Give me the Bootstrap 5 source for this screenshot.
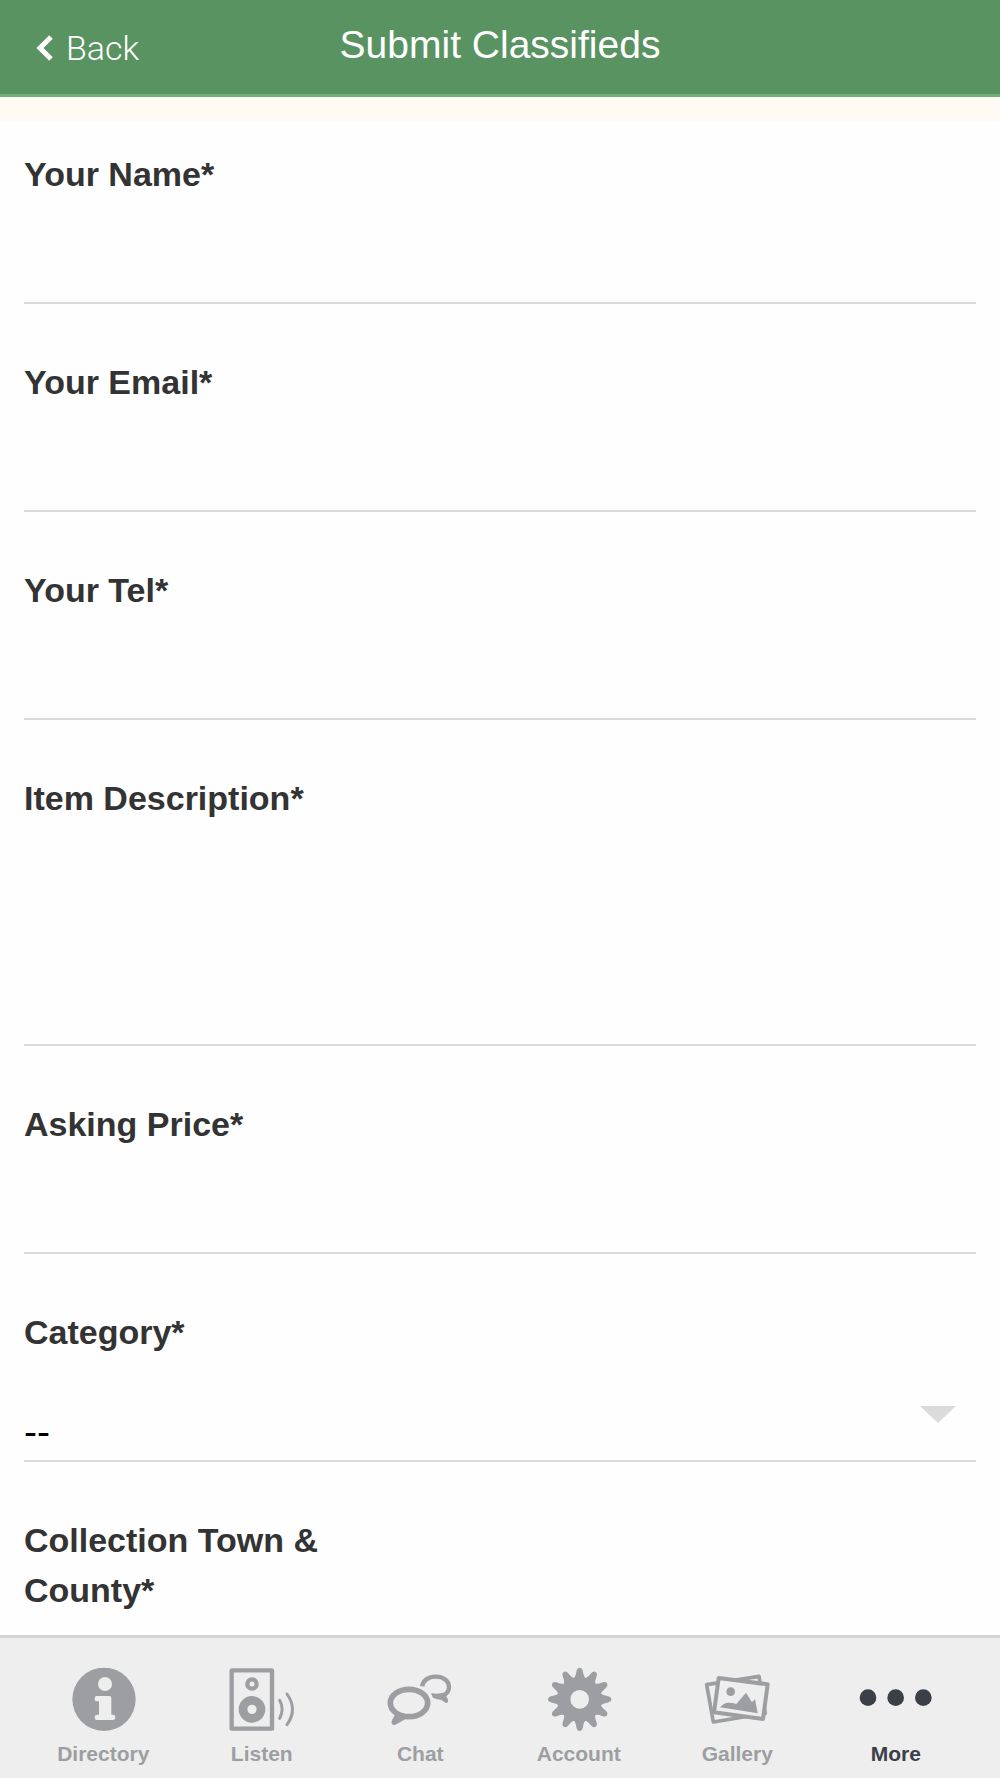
<!DOCTYPE html>
<html lang="en">
<head>
<meta charset="utf-8">
<meta name="viewport" content="width=device-width, initial-scale=1">
<title>Submit Classifieds</title>
<link href="https://cdn.jsdelivr.net/npm/bootstrap@5.3.0/dist/css/bootstrap.min.css" rel="stylesheet">
<style>
  body { font-family: "Liberation Sans", Arial, sans-serif; background: #fefefe; color: #333; }
  .app-head { background: #5a9362; border-bottom: 3px solid #71b079; height: 97px; }
  .back-link { font-family: Roboto, sans-serif; font-weight: 300; font-size: 34px; line-height: 44px; padding: 26px 0 0 36px; gap: 12px; }
  .app-title { font-size: 39px; line-height: 48px; padding-top: 21px; font-weight: 400; }
  .app-body { scrollbar-width: none; min-height: 0; }
  .app-body::-webkit-scrollbar { display: none; }
  .notice-strip { background: #fffaf3; height: 24px; }
  .ad-form { padding: 28px 24px 24px; }
  .field + .field { margin-top: 53px; }
  .field label { display: block; width: 35%; color: #333; font-size: 34px; line-height: 50px; padding-bottom: 1px; font-weight: 700; }
  .line-input { border: 0; border-bottom: 2px solid #dbdbdb; border-radius: 0; background-color: transparent; height: 104px; padding: 40px 0 0; font-size: 34px; color: #000; resize: none; }
  .line-area.line-input { height: 222px; }
  select.line-input { font-size: 39px; line-height: 44px; padding: 52px 60px 6px 0; color: #000;
    background: url("data:image/svg+xml,%3Csvg xmlns='http://www.w3.org/2000/svg' viewBox='0 0 36 17'%3E%3Cpath fill='%23dbdbdb' d='M0 0h36L18 17z'/%3E%3C/svg%3E") right 20px top 48px / 36px 17px no-repeat; }
  .tab-bar { background: #eee; border-top: 3px solid #d5d5d5; padding: 28px 25px 8px 24px; }
  .tab-item { flex: 1 1 0; gap: 6px; color: #9d9ea2; font-size: 21px; line-height: 32px; font-weight: 700; }
  .tab-item.current { color: #3b4048; }
  .tab-item svg { width: 80px; height: 66px; }
</style>
<script src="https://cdn.jsdelivr.net/npm/bootstrap@5.3.0/dist/js/bootstrap.bundle.min.js"></script>
</head>
<body class="vh-100 d-flex flex-column overflow-hidden">
<header class="app-head row g-0 flex-shrink-0 text-white align-items-start">
  <div class="col-3">
    <a href="#" class="back-link d-flex align-items-center text-white text-decoration-none">
      <svg width="18" height="26" viewBox="0 0 18 26" fill="none" stroke="#fff" stroke-width="5" aria-hidden="true"><path d="M15 2 4 13l11 11"/></svg>
      <span>Back</span>
    </a>
  </div>
  <h1 class="app-title col-6 text-center text-nowrap mb-0">Submit Classifieds</h1>
</header>

<main class="app-body flex-grow-1 overflow-auto">
  <div class="notice-strip"></div>
  <form class="ad-form">
    <div class="field"><label for="name">Your Name*</label><input id="name" type="text" class="form-control line-input" required></div>
    <div class="field"><label for="email">Your Email*</label><input id="email" type="email" class="form-control line-input" required></div>
    <div class="field"><label for="tel">Your Tel*</label><input id="tel" type="tel" class="form-control line-input" required></div>
    <div class="field"><label for="desc">Item Description*</label><textarea id="desc" class="form-control line-input line-area" required></textarea></div>
    <div class="field"><label for="price">Asking Price*</label><input id="price" type="text" class="form-control line-input" required></div>
    <div class="field"><label for="cat">Category*</label><select id="cat" class="form-select line-input" required><option value="">--</option></select></div>
    <div class="field"><label for="town">Collection Town &amp; County*</label><input id="town" type="text" class="form-control line-input" required></div>
  </form>
</main>

<nav class="tab-bar d-flex flex-shrink-0" aria-label="Main">
  <a href="#" class="tab-item d-flex flex-column align-items-center text-decoration-none">
    <svg viewBox="71 138 240 198" aria-hidden="true"><circle cx="194" cy="238" r="95" fill="currentColor"/><circle cx="197" cy="192" r="21" fill="#eee"/><path fill="#eee" d="M172 228h38q6 0 6 6v50h5q7 0 7 8t-7 8h-48q-7 0-7-8t7-8h6v-40h-6q-7 0-7-8t6-8z"/></svg>
    <span>Directory</span>
  </a>
  <a href="#" class="tab-item d-flex flex-column align-items-center text-decoration-none">
    <svg viewBox="546 138 240 198" fill="none" stroke="currentColor" aria-hidden="true"><rect x="575" y="151" width="121" height="175" rx="1" stroke-width="13" stroke-linejoin="round"/><circle cx="636" cy="192" r="14" stroke-width="13"/><circle cx="636" cy="268" r="27" stroke-width="26"/><path stroke-width="9" stroke-linecap="round" d="M719 241q15 27 0 54M741 222q33 46 0 92"/></svg>
    <span>Listen</span>
  </a>
  <a href="#" class="tab-item d-flex flex-column align-items-center text-decoration-none">
    <svg viewBox="63 138 240 198" fill="none" stroke="currentColor" aria-hidden="true"><ellipse cx="150" cy="249" rx="56" ry="41" stroke-width="17"/><path fill="currentColor" stroke="none" d="M105 274q6 9-2 19c-5 7-7 14-4 19q4 6 13 1l32-18-8-12z"/><path stroke-width="13" d="M190 199c1-17 18-29 40-29 23 0 40 13 40 31 0 12-7 21-18 26"/><path fill="currentColor" stroke="none" d="M216 219q15 4 28 1l22-4c-6 7-6 12-1 19 4 6 3 13-2 14-4 1-9-5-15-8-11-4-23-4-27-9z"/></svg>
    <span>Chat</span>
  </a>
  <a href="#" class="tab-item d-flex flex-column align-items-center text-decoration-none">
    <svg viewBox="537 138 240 198" aria-hidden="true">
      <defs><path id="tooth" d="M637 178c8-5 11-14 12-23q2-12 10-12t10 12c1 9 4 18 12 23z"/></defs>
      <g fill="currentColor"><use href="#tooth"/><use href="#tooth" transform="rotate(30 659 238)"/><use href="#tooth" transform="rotate(60 659 238)"/><use href="#tooth" transform="rotate(90 659 238)"/><use href="#tooth" transform="rotate(120 659 238)"/><use href="#tooth" transform="rotate(150 659 238)"/><use href="#tooth" transform="rotate(180 659 238)"/><use href="#tooth" transform="rotate(210 659 238)"/><use href="#tooth" transform="rotate(240 659 238)"/><use href="#tooth" transform="rotate(270 659 238)"/><use href="#tooth" transform="rotate(300 659 238)"/><use href="#tooth" transform="rotate(330 659 238)"/></g>
      <circle cx="659" cy="238" r="47" fill="none" stroke="currentColor" stroke-width="38"/>
    </svg>
    <span>Account</span>
  </a>
  <a href="#" class="tab-item d-flex flex-column align-items-center text-decoration-none">
    <svg viewBox="54 138 240 198" fill="none" stroke="currentColor" stroke-linejoin="round" aria-hidden="true"><path stroke-width="11" d="M83 194 240 169 259 280 103 306z"/><path fill="#eee" stroke-width="12" d="M119 174 266 193 252 297 105 277z"/><circle cx="155" cy="215" r="13" fill="currentColor" stroke="none"/><path fill="currentColor" stroke="none" d="M123 262q12-15 27-14 11 0 22 4l29-34 18 29 9-10 8 43z"/></svg>
    <span>Gallery</span>
  </a>
  <a href="#" class="tab-item current d-flex flex-column align-items-center text-decoration-none" aria-current="page">
    <svg viewBox="528 138 240 198" fill="currentColor" aria-hidden="true"><circle cx="564" cy="233" r="25"/><circle cx="647" cy="233" r="25"/><circle cx="730" cy="233" r="25"/></svg>
    <span>More</span>
  </a>
</nav>
</body>
</html>
